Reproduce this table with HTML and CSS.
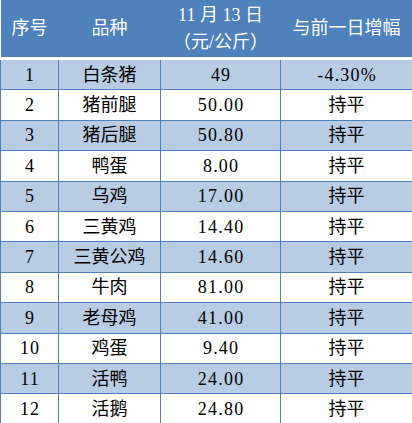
FILE: index.html
```html
<!DOCTYPE html>
<html lang="zh">
<head>
<meta charset="utf-8">
<link rel="stylesheet" href="styles.css">
</head>
<body>
<table class="price">
  <colgroup>
    <col class="c1"><col class="c2"><col class="c3"><col class="c4">
  </colgroup>
  <thead>
    <tr>
      <th>序号</th>
      <th>品种</th>
      <th><span class="l1">11 月 13 日</span><span class="l2">（元/公斤）</span></th>
      <th>与前一日增幅</th>
    </tr>
  </thead>
  <tbody>
    <tr class="band"><td class="num">1</td><td>白条猪</td><td class="num">49</td><td class="num">-4.30%</td></tr>
    <tr><td class="num">2</td><td>猪前腿</td><td class="num">50.00</td><td>持平</td></tr>
    <tr class="band"><td class="num">3</td><td>猪后腿</td><td class="num">50.80</td><td>持平</td></tr>
    <tr><td class="num">4</td><td>鸭蛋</td><td class="num">8.00</td><td>持平</td></tr>
    <tr class="band"><td class="num">5</td><td>乌鸡</td><td class="num">17.00</td><td>持平</td></tr>
    <tr><td class="num">6</td><td>三黄鸡</td><td class="num">14.40</td><td>持平</td></tr>
    <tr class="band"><td class="num">7</td><td>三黄公鸡</td><td class="num">14.60</td><td>持平</td></tr>
    <tr><td class="num">8</td><td>牛肉</td><td class="num">81.00</td><td>持平</td></tr>
    <tr class="band"><td class="num">9</td><td>老母鸡</td><td class="num">41.00</td><td>持平</td></tr>
    <tr><td class="num">10</td><td>鸡蛋</td><td class="num">9.40</td><td>持平</td></tr>
    <tr class="band"><td class="num">11</td><td>活鸭</td><td class="num">24.00</td><td>持平</td></tr>
    <tr><td class="num">12</td><td>活鹅</td><td class="num">24.80</td><td>持平</td></tr>
  </tbody>
</table>
</body>
</html>
```

FILE: styles.css
```css
html, body {
  margin: 0;
  padding: 0;
  background: #ffffff;
}

.price {
  border-collapse: collapse;
  table-layout: fixed;
  width: 412px;
  font-family: "Liberation Serif", "Noto Sans CJK SC", serif;
  font-size: 18px;
  color: #000;
}

.c1 { width: 58px; }
.c2 { width: 102px; }
.c3 { width: 120px; }
.c4 { width: 132px; }

.price th {
  background: #4f81bd;
  color: #ffffff;
  font-weight: normal;
  height: 57px;
  padding: 0;
  text-align: center;
  vertical-align: middle;
  border: none;
  border-bottom: 3px solid #ffffff;
  line-height: 27px;
}

.price th .l1,
.price th .l2 {
  display: block;
}

.price td {
  border: 1px solid #4f81bd;
  height: 29.4px;
  padding: 0;
  text-align: center;
  vertical-align: middle;
  line-height: 20px;
}

.price td.num {
  letter-spacing: 1.2px;
  text-indent: 1.2px;
}

.price tbody tr:first-child td {
  border-top: none;
}

.price tr.band td {
  background: #b8cce4;
}
```
